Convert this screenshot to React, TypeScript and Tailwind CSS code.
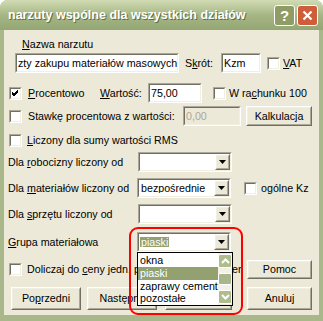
import React from "react";

function Sunken({ className = "", inner = "bg-white", children }: { className?: string; inner?: string; children?: React.ReactNode }) {
  return (
    <div className={`border border-t-[#ACA899] border-l-[#ACA899] border-r-white border-b-white ${className}`}>
      <div className={`h-full w-full border border-t-[#716F64] border-l-[#716F64] border-r-[#F1EFE2] border-b-[#F1EFE2] ${inner} flex items-center overflow-hidden whitespace-nowrap pl-[1px]`}>
        {children}
      </div>
    </div>
  );
}

function Check({ checked = false }: { checked?: boolean }) {
  return (
    <div className="h-[13px] w-[13px] shrink-0 border border-t-[#ACA899] border-l-[#ACA899] border-r-white border-b-white">
      <div className="flex h-full w-full items-center justify-center border border-t-[#716F64] border-l-[#716F64] border-r-[#F1EFE2] border-b-[#F1EFE2] bg-white">
        {checked && (
          <svg width="7" height="7" viewBox="0 0 7 7">
            <path d="M0 3 L2 5 L6 1 M0 4 L2 6 L6 2 M0 2 L2 4 L6 0" stroke="#000" strokeWidth="1" fill="none" />
          </svg>
        )}
      </div>
    </div>
  );
}

function Btn({ className = "", children }: { className?: string; children?: React.ReactNode }) {
  return (
    <div className={`shrink-0 border border-t-white border-l-white border-r-[#716F64] border-b-[#716F64] ${className}`}>
      <div className="flex h-full w-full items-center justify-center border border-t-[#F1EFE2] border-l-[#F1EFE2] border-r-[#ACA899] border-b-[#ACA899] bg-[#ECE9D8]">
        {children}
      </div>
    </div>
  );
}

function Combo({ value, selected = false }: { value?: string; selected?: boolean }) {
  return (
    <Sunken className="h-[20px] w-[94px] shrink-0" inner="bg-white">
      <div className="flex-1 overflow-hidden">
        {value && (
          <span className={selected ? "bg-[#93A070] px-[1px] text-white" : "px-[1px]"}>{value}</span>
        )}
      </div>
      <Btn className="h-[16px] w-[15px]">
        <svg width="7" height="4" viewBox="0 0 7 4">
          <path d="M0 0 H7 L3.5 4 Z" fill="#000" />
        </svg>
      </Btn>
    </Sunken>
  );
}

function ScrollBtn({ up }: { up?: boolean }) {
  return (
    <div className="flex h-[14px] w-[14px] items-center justify-center rounded-[2px] border border-white bg-[#AFBD8E]">
      <svg width="9" height="6" viewBox="0 0 9 6">
        <path d={up ? "M1 5 L4.5 1.5 L8 5" : "M1 1 L4.5 4.5 L8 1"} stroke="#fff" strokeWidth="2" fill="none" />
      </svg>
    </div>
  );
}

export default function App() {
  return (
    <div className="relative h-[321px] w-[323px] overflow-hidden bg-white font-['Liberation_Sans',Arial,sans-serif] text-[10.7px] leading-none text-black">
      <div className="flex h-full flex-col rounded-t-[8px] bg-[#A9B88A]">
        {/* title bar */}
        <div className="flex h-[30px] shrink-0 items-center rounded-t-[8px] bg-gradient-to-b from-[#D2DCB4] via-[#A6B684] to-[#93A674] pl-[8px] pr-[5px]">
          <span className="flex-1 text-[12.5px] font-bold text-white [text-shadow:1px_1px_0_#5F6F42]">
            narzuty wspólne dla wszystkich działów
          </span>
          <div className="flex h-[21px] w-[21px] items-center justify-center rounded-[3px] border border-white bg-[#8E9D66] text-[15px] font-bold text-white">
            ?
          </div>
          <div className="ml-[2px] flex h-[21px] w-[21px] items-center justify-center rounded-[3px] border border-white bg-[#CE5E3B]">
            <svg width="11" height="11" viewBox="0 0 11 11">
              <path d="M1.5 1.5 L9.5 9.5 M9.5 1.5 L1.5 9.5" stroke="#fff" strokeWidth="2.2" />
            </svg>
          </div>
        </div>

        {/* body */}
        <div className="mx-[4px] mb-[6px] flex flex-1 flex-col bg-[#ECE9D8]">
          <div className="ml-[18px] mt-[8px] h-[12px] leading-[12px]">
            <u>N</u>azwa narzutu
          </div>

          <div className="mt-[3px] flex h-[20px] items-center">
            <Sunken className="ml-[11px] h-[20px] w-[164px]">zty zakupu materiałów masowych</Sunken>
            <span className="ml-[6px] w-[36px]">
              S<u>k</u>rót:
            </span>
            <Sunken className="h-[20px] w-[40px]">Kzm</Sunken>
            <div className="ml-[6px]">
              <Check />
            </div>
            <span className="ml-[3px]">
              <u>V</u>AT
            </span>
          </div>

          <div className="mt-[10px] flex h-[20px] items-center">
            <div className="ml-[5px]">
              <Check checked />
            </div>
            <span className="ml-[6px] w-[72px]">
              <u>P</u>rocentowo
            </span>
            <span className="w-[48px]">
              <u>W</u>artość:
            </span>
            <Sunken className="h-[20px] w-[54px]">75,00</Sunken>
            <div className="ml-[11px]">
              <Check />
            </div>
            <span className="ml-[3px]">
              W ra<u>c</u>hunku 100
            </span>
          </div>

          <div className="mt-[3px] flex h-[20px] items-center">
            <div className="ml-[5px]">
              <Check />
            </div>
            <span className="ml-[6px] w-[155px]">Stawkę procentowa z wartości:</span>
            <Sunken className="h-[20px] w-[58px]" inner="bg-[#ECE9D8] text-[#ACA899]">
              0,00
            </Sunken>
            <Btn className="ml-[5px] h-[20px] w-[66px]">Kalkulacja</Btn>
          </div>

          <div className="mt-[8px] flex h-[13px] items-center">
            <div className="ml-[5px]">
              <Check />
            </div>
            <span className="ml-[5px]">
              <u>L</u>iczony dla sumy wartości RMS
            </span>
          </div>

          <div className="mt-[5px] flex h-[20px] items-center">
            <span className="ml-[4px] w-[130px]">
              Dla <u>r</u>obocizny liczony od
            </span>
            <Combo />
          </div>

          <div className="mt-[6px] flex h-[20px] items-center">
            <span className="ml-[4px] w-[129px]">
              Dla <u>m</u>ateriałów liczony od
            </span>
            <Combo value="bezpośrednie" />
            <div className="ml-[13px]">
              <Check />
            </div>
            <span className="ml-[4px]">ogólne Kz</span>
          </div>

          <div className="mt-[6px] flex h-[20px] items-center">
            <span className="ml-[4px] w-[130px]">
              Dla <u>s</u>przętu liczony od
            </span>
            <Combo />
          </div>

          <div className="mt-[8px] flex h-[20px] items-center">
            <span className="ml-[4px] w-[129px]">
              <u>G</u>rupa materiałowa
            </span>
            <Combo value="piaski" selected />
          </div>

          <div className="mt-[8px] flex h-[19px] items-center">
            <div className="ml-[5px]">
              <Check />
            </div>
            <span className="ml-[5px] flex-1 overflow-hidden whitespace-nowrap">
              Doliczaj do <u>c</u>eny jedn. pozycji w kalkulacji cen
            </span>
            <Btn className="ml-[6px] mr-[7px] h-[19px] w-[65px]">Pomoc</Btn>
          </div>

          <div className="mt-[8px] flex h-[23px] items-center">
            <Btn className="ml-[7px] h-[23px] w-[70px]">
              Po<u>p</u>rzedni
            </Btn>
            <Btn className="ml-[6px] h-[23px] w-[70px]">Następny</Btn>
            <Btn className="ml-[8px] h-[23px] w-[67px]">OK</Btn>
            <Btn className="ml-[15px] h-[23px] w-[65px]">Anuluj</Btn>
          </div>
        </div>
      </div>

      {/* dropdown list */}
      <div className="absolute left-[137px] top-[252px] flex h-[54px] w-[96px] border border-black bg-white">
        <div className="flex flex-1 flex-col pt-[1px]">
          <div className="h-[13px] pl-[2px] leading-[13px]">okna</div>
          <div className="h-[13px] bg-[#93A070] pl-[2px] leading-[13px] text-white">piaski</div>
          <div className="h-[13px] overflow-hidden whitespace-nowrap pl-[2px] leading-[13px]">zaprawy cement</div>
          <div className="h-[13px] pl-[2px] leading-[13px]">pozostałe</div>
        </div>
        <div className="flex w-[14px] flex-col justify-between bg-[#F3F1E6] py-[1px]">
          <ScrollBtn up />
          <div className="h-[12px] w-[14px] rounded-[2px] border border-white bg-[#A9B58C]" />
          <ScrollBtn />
        </div>
      </div>

      {/* annotation */}
      <div className="pointer-events-none absolute left-[129px] top-[227px] h-[88px] w-[114px] rounded-[9px] border-2 border-[#FF0000]" />
    </div>
  );
}
